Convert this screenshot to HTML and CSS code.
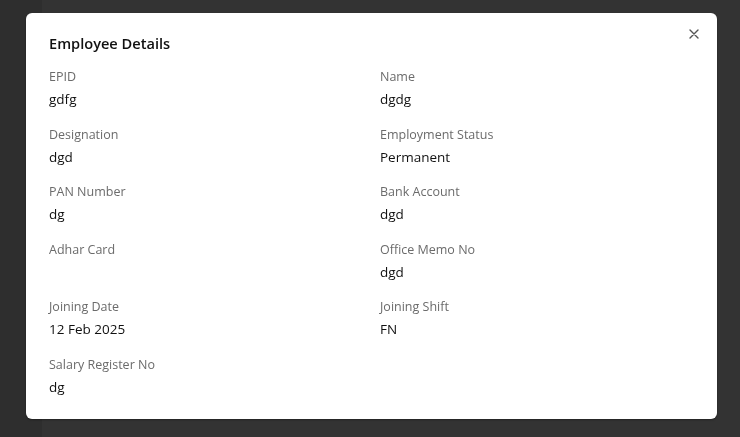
FILE: index.html
```html
<!DOCTYPE html>
<html>
<head>
<meta charset="utf-8">
<link rel="stylesheet" href="styles.css">
</head>
<body>
<div class="app">
  <aside class="sidebar"></aside>
  <main class="page"></main>
</div>
<div class="overlay">
  <div class="modal">
    <button class="close" aria-label="Close">
      <svg width="10" height="10" viewBox="0 0 10 10"><path d="M1 1L9 9M9 1L1 9" stroke="#555" stroke-width="1.4" stroke-linecap="round"/></svg>
    </button>
    <h2 class="title">Employee Details</h2>
    <div class="grid">
      <div class="field"><div class="label">EPID</div><div class="value">gdfg</div></div>
      <div class="field"><div class="label">Name</div><div class="value">dgdg</div></div>
      <div class="field"><div class="label">Designation</div><div class="value">dgd</div></div>
      <div class="field"><div class="label">Employment Status</div><div class="value">Permanent</div></div>
      <div class="field"><div class="label">PAN Number</div><div class="value">dg</div></div>
      <div class="field"><div class="label">Bank Account</div><div class="value">dgd</div></div>
      <div class="field"><div class="label">Adhar Card</div><div class="value"></div></div>
      <div class="field"><div class="label">Office Memo No</div><div class="value">dgd</div></div>
      <div class="field"><div class="label">Joining Date</div><div class="value">12 Feb 2025</div></div>
      <div class="field"><div class="label">Joining Shift</div><div class="value">FN</div></div>
      <div class="field"><div class="label">Salary Register No</div><div class="value">dg</div></div>
    </div>
  </div>
</div>
</body>
</html>
```
FILE: styles.css
```css
* { box-sizing: border-box; }
html, body { margin: 0; height: 100%; }
body {
  font-family: "Open Sans", "Noto Sans", sans-serif;
  background: #333333;
  overflow: hidden;
}
.app { display: flex; height: 100%; }
.sidebar { width: 42px; background: #2e2e2e; }
.page { flex: 1; }
.overlay {
  position: fixed; inset: 0;
  display: flex; align-items: flex-start; justify-content: flex-start;
  padding: 13px 0 0 26px;
}
.modal {
  position: relative;
  width: 691px;
  height: 406px;
  background: #fff;
  border-radius: 6px;
  box-shadow: 0 1px 2px rgba(0,0,0,0.35);
  padding: 18px 23px 0 23px;
}
.close {
  position: absolute; top: 11px; right: 13px;
  width: 20px; height: 20px;
  border: 0; background: transparent; padding: 0;
  display: flex; align-items: center; justify-content: center;
}
.title {
  margin: 0 0 13px 0;
  font-size: 14.6px; font-weight: 600; color: #111;
  line-height: 24px;
}
.grid {
  display: grid;
  grid-template-columns: 1fr 1fr;
  column-gap: 17px;
  row-gap: 16.6px;
}
.label { font-size: 12.5px; line-height: 18px; color: #6b6b6b; }
.value { font-size: 13.5px; line-height: 20px; color: #111; margin-top: 3px; min-height: 20px; }
```
